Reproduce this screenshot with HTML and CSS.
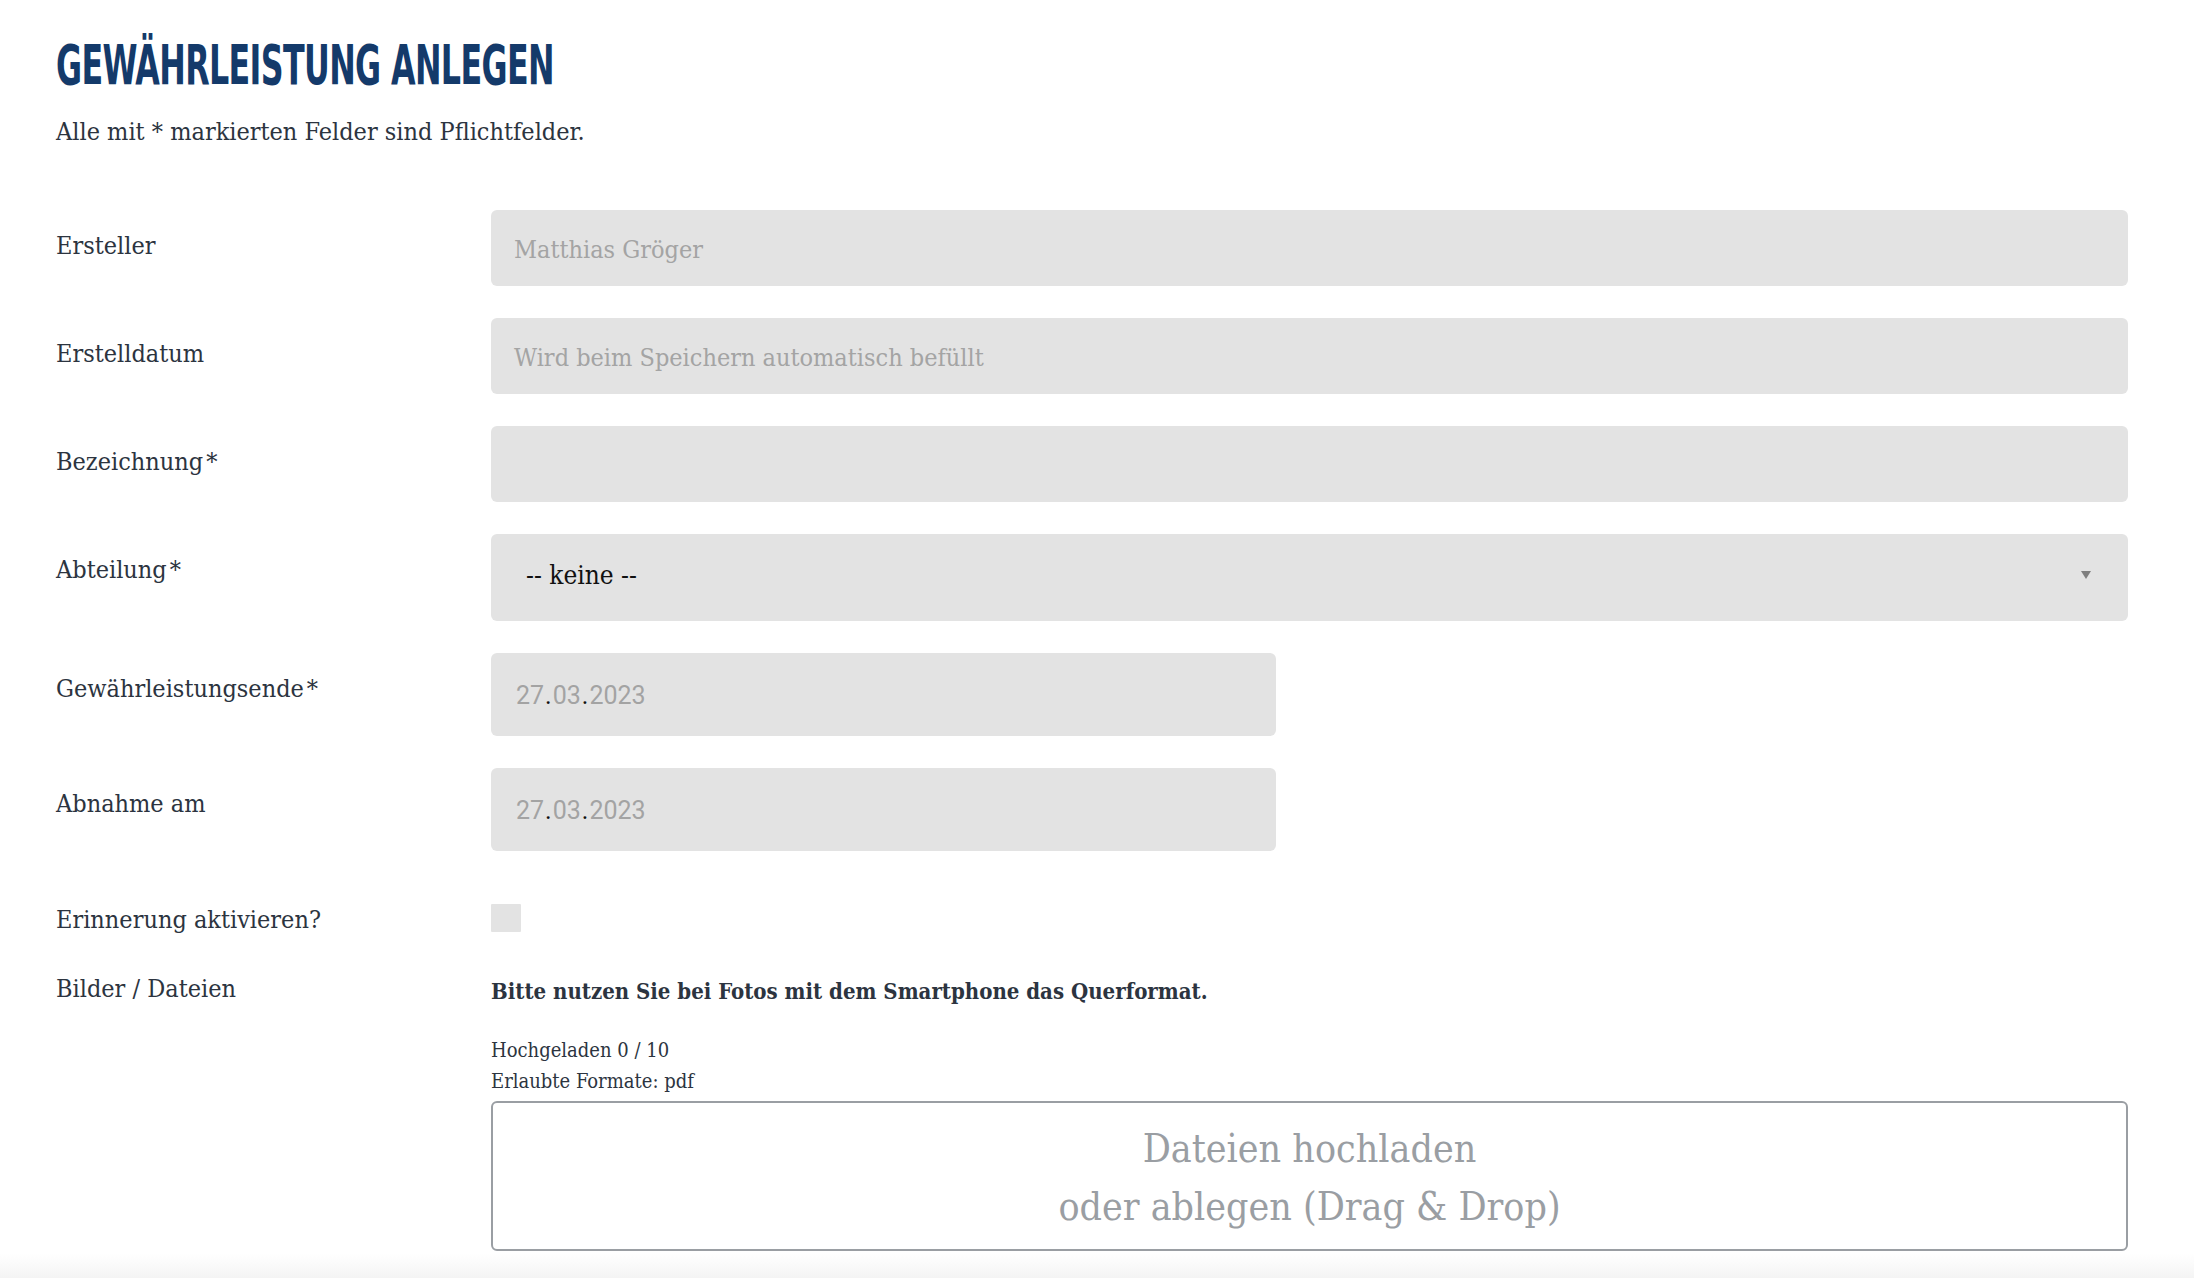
FILE: index.html
```html
<!DOCTYPE html>
<html lang="de">
<head>
<meta charset="utf-8">
<title>Gewährleistung anlegen</title>
<link rel="stylesheet" href="styles.css">
</head>
<body>
<main class="page">
  <h1 class="title"><span class="title-text">GEWÄHRLEISTUNG ANLEGEN</span></h1>
  <p class="intro">Alle mit * markierten Felder sind Pflichtfelder.</p>

  <form class="form">
    <div class="row">
      <label class="label">Ersteller</label>
      <div class="field"><div class="input"><span class="ph">Matthias Gröger</span></div></div>
    </div>
    <div class="row">
      <label class="label">Erstelldatum</label>
      <div class="field"><div class="input"><span class="ph">Wird beim Speichern automatisch befüllt</span></div></div>
    </div>
    <div class="row">
      <label class="label">Bezeichnung<span class="req">*</span></label>
      <div class="field"><div class="input"></div></div>
    </div>
    <div class="row">
      <label class="label">Abteilung<span class="req">*</span></label>
      <div class="field"><div class="select"><span class="select-val">-- keine --</span><span class="arrow"></span></div></div>
    </div>
    <div class="row">
      <label class="label">Gewährleistungsende<span class="req">*</span></label>
      <div class="field"><div class="date"><span>27</span><span class="sep">.</span><span>03</span><span class="sep">.</span><span>2023</span></div></div>
    </div>
    <div class="row">
      <label class="label">Abnahme am</label>
      <div class="field"><div class="date"><span>27</span><span class="sep">.</span><span>03</span><span class="sep">.</span><span>2023</span></div></div>
    </div>
    <div class="row row-check">
      <label class="label label-check">Erinnerung aktivieren?</label>
      <div class="field"><span class="checkbox"></span></div>
    </div>
    <div class="row row-files">
      <label class="label label-files">Bilder / Dateien</label>
      <div class="field">
        <p class="hint">Bitte nutzen Sie bei Fotos mit dem Smartphone das Querformat.</p>
        <div class="meta">
          <div>Hochgeladen 0 / 10</div>
          <div>Erlaubte Formate: pdf</div>
        </div>
        <div class="dropzone">Dateien hochladen<br>oder ablegen (Drag &amp; Drop)</div>
      </div>
    </div>
  </form>
</main>
<div class="bottom-fade"></div>
</body>
</html>
```

FILE: styles.css
```css
html, body {
  margin: 0;
  padding: 0;
  background: #ffffff;
}
body {
  font-family: "DejaVu Serif Condensed", "DejaVu Serif", serif;
  color: #2c3440;
  height: 1278px;
  overflow: hidden;
  position: relative;
}
.page {
  padding: 40px 66px 0 56px;
}
.title {
  margin: 0;
  height: 50px;
  line-height: 50px;
  font-family: "DejaVu Sans Condensed", "DejaVu Sans", sans-serif;
  font-weight: bold;
  font-size: 56px;
  color: #143a6a;
  white-space: nowrap;
}
.title-text {
  display: inline-block;
  transform: scaleX(0.63);
  transform-origin: left center;
  letter-spacing: -1px;
}
.intro {
  margin: 27px 0 0 0;
  font-size: 25px;
  line-height: 30px;
}
.form {
  margin-top: 63px;
}
.row {
  display: grid;
  grid-template-columns: 435px 1fr;
  margin-bottom: 32px;
}
.label {
  font-size: 25px;
  line-height: 32px;
  padding-top: 20px;
}
.req {
  margin-left: 3px;
}
.input {
  height: 76px;
  background: #e3e3e3;
  border-radius: 6px;
  display: flex;
  align-items: center;
  padding: 0 23px;
  box-sizing: border-box;
}
.ph {
  color: #a4a4a4;
  font-size: 25px;
  padding-top: 2px;
}
.select {
  height: 87px;
  background: #e3e3e3;
  border-radius: 6px;
  display: flex;
  align-items: center;
  justify-content: space-between;
  padding: 0 37px 6px 35px;
  box-sizing: border-box;
}
.select-val {
  color: #111111;
  font-size: 26px;
}
.arrow {
  width: 0;
  height: 0;
  border-left: 5px solid transparent;
  border-right: 5px solid transparent;
  border-top: 8px solid #7f7f7f;
}
.date {
  width: 785px;
  height: 83px;
  background: #e3e3e3;
  border-radius: 6px;
  display: flex;
  align-items: center;
  padding: 2px 25px 0 25px;
  box-sizing: border-box;
  font-family: Roboto, "Liberation Sans", sans-serif;
  font-size: 25px;
  color: #a3a3a3;
}
.date .sep {
  color: #111111;
  padding: 0 1px;
}
.row-check {
  margin-top: 53px;
  margin-bottom: 0;
  align-items: center;
}
.label-check {
  padding-top: 0;
}
.checkbox {
  display: block;
  width: 30px;
  height: 28px;
  margin-bottom: 4px;
  background: #e3e3e3;
  border-radius: 1px;
}
.row-files {
  margin-top: 37px;
}
.label-files {
  padding-top: 0;
}
.hint {
  margin: 0;
  font-size: 22px;
  line-height: 32px;
  font-weight: bold;
  padding-top: 2px;
}
.meta {
  margin-top: 28px;
  font-size: 20px;
  line-height: 31px;
}
.dropzone {
  margin-top: 4px;
  height: 150px;
  border: 2px solid #9a9ea3;
  border-radius: 6px;
  box-sizing: border-box;
  text-align: center;
  color: #9a9ea3;
  font-size: 39px;
  line-height: 58px;
  padding-top: 17px;
}
.bottom-fade {
  position: absolute;
  left: 0;
  right: 0;
  bottom: 0;
  height: 24px;
  background: linear-gradient(rgba(255,255,255,0), #f4f4f4);
}
```
